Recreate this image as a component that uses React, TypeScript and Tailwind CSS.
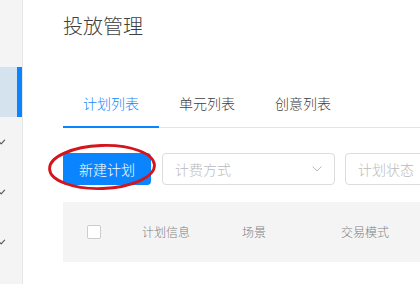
import React from "react";

const Tick = () => (
  <svg width="6" height="6" viewBox="0 0 6 6" className="block">
    <path d="M0 3.6 L1.2 4.8 L4.6 1.2" fill="none" stroke="#555" strokeWidth="1.1" strokeLinecap="round" strokeLinejoin="round" />
  </svg>
);

export default function App() {
  return (
    <div
      className="flex w-[420px] h-[284px] overflow-hidden bg-white font-light"
      style={{ fontFamily: '"Noto Sans CJK SC", "Noto Sans", sans-serif' }}
    >
      <div className="w-[23px] shrink-0 bg-[#f4f4f4] border-r border-[#e6e6e6] pt-[67px] flex flex-col">
        <div className="h-[50px] bg-[#d5e3ee] flex justify-end">
          <div className="w-[5px] h-full bg-[#0b85ff]" />
        </div>
        <div className="h-[50px] flex items-center"><Tick /></div>
        <div className="h-[50px] flex items-center"><Tick /></div>
        <div className="h-[50px] flex items-center"><Tick /></div>
      </div>
      <div className="flex-1 min-w-0 pl-[40px] pt-[12px] flex flex-col">
        <div className="text-[20px] leading-[28px] text-[#404040]">投放管理</div>
        <div className="mt-[40px] flex border-b border-[#e5e5e5]">
          <div className="relative w-[96px] h-[47px] flex items-center justify-center text-[14px] text-[#1787fb]">
            计划列表
            <span className="absolute left-0 right-0 -bottom-px h-[2px] bg-[#0b85ff]" />
          </div>
          <div className="w-[96px] h-[47px] flex items-center justify-center text-[14px] text-[#404040]">单元列表</div>
          <div className="w-[96px] h-[47px] flex items-center justify-center text-[14px] text-[#404040]">创意列表</div>
        </div>
        <div className="mt-[25px] flex items-center gap-[10px]">
          <div className="relative shrink-0">
            <button className="w-[88px] h-[32px] rounded-[4px] bg-[#0b85ff] text-white text-[14px] flex items-center justify-center">
              新建计划
            </button>
            <svg className="absolute left-[-15px] top-[-9px] overflow-visible" width="108" height="46" viewBox="0 0 108 46">
              <ellipse cx="54" cy="23" rx="52.5" ry="21.5" fill="none" stroke="#d4151b" strokeWidth="2.8" transform="rotate(-2 54 23)" />
            </svg>
          </div>
          <div className="ml-px shrink-0 w-[173px] h-[32px] rounded-[4px] border border-[#dcdcdc] flex items-center justify-between pl-[12px] pr-[12px] text-[14px] text-[#bbbbbb]">
            <span>计费方式</span>
            <svg width="10" height="6" viewBox="0 0 10 6">
              <path d="M0.5 0.5 L5 5 L9.5 0.5" fill="none" stroke="#bbbbbb" strokeWidth="1" />
            </svg>
          </div>
          <div className="shrink-0 w-[173px] h-[32px] rounded-[4px] border border-[#dcdcdc] flex items-center pl-[12px] text-[14px] text-[#bbbbbb]">
            <span>计划状态</span>
          </div>
        </div>
        <div className="mt-[17px] h-[60px] bg-[#f4f4f4] flex items-center text-[12px] text-[#808080] w-[400px]">
          <div className="ml-[24px] w-[14px] h-[14px] bg-white border border-[#cccccc] rounded-[2px] shrink-0" />
          <div className="ml-[41px] w-[100px] shrink-0">计划信息</div>
          <div className="w-[99px] shrink-0">场景</div>
          <div className="shrink-0">交易模式</div>
        </div>
      </div>
    </div>
  );
}
